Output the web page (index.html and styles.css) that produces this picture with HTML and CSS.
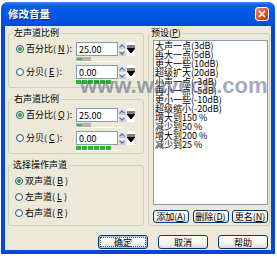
FILE: index.html
```html
<!DOCTYPE html>
<html lang="zh-CN">

<head>
    <meta charset="UTF-8">
    <title>修改音量</title>
    <link rel="stylesheet" href="styles.css">
</head>

<body>
    <div class="window">
        <div class="titlebar">
            <span class="title">修改音量</span>
            <span class="close">
                <svg width="8" height="8" viewBox="0 0 8 8"><path d="M1 1L7 7M7 1L1 7" stroke="#fff" stroke-width="1.6"/></svg>
            </span>
        </div>
        <div class="client">
            <div class="main">
                <div class="left-col">
                    <fieldset class="group">
                        <legend>左声道比例</legend>
                        <div class="opt-row">
                            <label class="radio checked"><span class="dot"></span>百分比(<u>N</u>):</label>
                            <div class="field">
                                <div class="spin">
                                    <span class="input">25.00</span>
                                    <span class="updown"><i class="up"></i><i class="down"></i></span>
                                    <span class="drop"><svg width="8" height="10" viewBox="0 0 8 10"><path d="M0 2H8M0 4H8L4 9Z" stroke="#000" fill="#000"/></svg></span>
                                </div>
                                <div class="meter"><span class="track"><span class="fill"></span></span></div>
                            </div>
                        </div>
                        <div class="opt-row">
                            <label class="radio"><span class="dot"></span>分贝(<u>E</u>):</label>
                            <div class="field">
                                <div class="spin">
                                    <span class="input">0.00</span>
                                    <span class="updown"><i class="up"></i><i class="down"></i></span>
                                    <span class="drop"><svg width="8" height="10" viewBox="0 0 8 10"><path d="M0 2H8M0 4H8L4 9Z" stroke="#000" fill="#000"/></svg></span>
                                </div>
                                <div class="meter"><span class="blocks"><i></i><i></i><i></i><i></i><i></i><i></i></span></div>
                            </div>
                        </div>
                    </fieldset>
                    <fieldset class="group">
                        <legend>右声道比例</legend>
                        <div class="opt-row">
                            <label class="radio checked"><span class="dot"></span>百分比(<u>Q</u>):</label>
                            <div class="field">
                                <div class="spin">
                                    <span class="input">25.00</span>
                                    <span class="updown"><i class="up"></i><i class="down"></i></span>
                                    <span class="drop"><svg width="8" height="10" viewBox="0 0 8 10"><path d="M0 2H8M0 4H8L4 9Z" stroke="#000" fill="#000"/></svg></span>
                                </div>
                                <div class="meter"><span class="track"><span class="fill"></span></span></div>
                            </div>
                        </div>
                        <div class="opt-row">
                            <label class="radio"><span class="dot"></span>分贝(<u>C</u>):</label>
                            <div class="field">
                                <div class="spin">
                                    <span class="input">0.00</span>
                                    <span class="updown"><i class="up"></i><i class="down"></i></span>
                                    <span class="drop"><svg width="8" height="10" viewBox="0 0 8 10"><path d="M0 2H8M0 4H8L4 9Z" stroke="#000" fill="#000"/></svg></span>
                                </div>
                                <div class="meter"><span class="blocks"><i></i><i></i><i></i><i></i><i></i><i></i></span></div>
                            </div>
                        </div>
                    </fieldset>
                    <fieldset class="group channels">
                        <legend>选择操作声道</legend>
                        <label class="radio checked"><span class="dot"></span>双声道(<u>B</u>)</label>
                        <label class="radio"><span class="dot"></span>左声道(<u>L</u>)</label>
                        <label class="radio"><span class="dot"></span>右声道(<u>R</u>)</label>
                    </fieldset>
                </div>
                <fieldset class="group presets">
                    <legend>预设(<u>P</u>)</legend>
                    <div class="listbox">
                        <div>大声一点(3dB)</div>
                        <div>再大一点(5dB)</div>
                        <div>更大一些(10dB)</div>
                        <div>超级扩大(20dB)</div>
                        <div>小声一点(-3dB)</div>
                        <div>再小一点(-5dB)</div>
                        <div>更小一些(-10dB)</div>
                        <div>超级缩小(-20dB)</div>
                        <div>增大到150 %</div>
                        <div>减少到50 %</div>
                        <div>增大到200 %</div>
                        <div>减少到25 %</div>
                    </div>
                    <div class="list-buttons">
                        <button class="btn small">添加(<u>A</u>)</button>
                        <button class="btn small">删除(<u>D</u>)</button>
                        <button class="btn small">更名(<u>N</u>)</button>
                    </div>
                </fieldset>
            </div>
            <div class="footer">
                <button class="btn default">确定</button>
                <button class="btn">取消</button>
                <button class="btn">帮助</button>
            </div>
        </div>
    </div>
    <div class="watermark">www.wavecn.com</div>
</body>

</html>
```

FILE: styles.css
```css
* {
    box-sizing: border-box;
}

body {
    margin: 0;
    width: 277px;
    height: 259px;
    overflow: hidden;
    position: relative;
    background: #fff;
    font-family: "Noto Sans CJK SC", sans-serif;
    font-size: 9px;
    line-height: 10px;
    color: #000;
}

u {
    text-decoration: underline;
}

.window {
    margin: 2px 0 0 1px;
    width: 274px;
    height: 252px;
    display: flex;
    flex-direction: column;
    background: #0844d8;
    border-radius: 7px 7px 0 0;
}

.titlebar {
    height: 24px;
    flex: none;
    display: flex;
    align-items: center;
    justify-content: space-between;
    padding: 0 6px 0 7px;
    border-radius: 7px 7px 0 0;
    background: linear-gradient(#3d8df5 0, #0a5fe8 3px, #0257e7 45%, #0052e0 85%, #0445c6 100%);
}

.title {
    color: #fff;
    font-size: 10.5px;
    font-weight: bold;
    text-shadow: 1px 1px 0 #0a2a8a;
}

.close {
    width: 14px;
    height: 14px;
    display: flex;
    align-items: center;
    justify-content: center;
    border: 1px solid #fff;
    border-radius: 3px;
    background: linear-gradient(135deg, #f08a62, #df4b22 60%, #c8381a);
}

.client {
    flex: 1;
    margin: 0 4px 4px;
    background: #ece9d8;
    display: flex;
    flex-direction: column;
}

.main {
    display: flex;
    gap: 4px;
    margin-top: 2px;
    padding-left: 3px;
}

.left-col {
    width: 136px;
    display: flex;
    flex-direction: column;
    gap: 6px;
}

.group {
    margin: 0;
    min-width: 0;
    border: 1px solid #d0d0bf;
    border-radius: 3px;
    padding: 4px 0 2px 7px;
}

.group legend {
    padding: 0 1px;
    margin-left: -3px;
    line-height: 10px;
}

.opt-row {
    display: flex;
    align-items: flex-start;
}

.opt-row + .opt-row {
    margin-top: 3px;
}

.opt-row .radio {
    width: 60px;
    height: 14px;
}

.radio {
    display: flex;
    align-items: center;
    gap: 2px;
    white-space: nowrap;
}

.dot {
    width: 8px;
    height: 8px;
    border: 1px solid #2a5a8c;
    border-radius: 50%;
    background: radial-gradient(circle at 65% 65%, #fff, #dcdcd4);
    display: flex;
    align-items: center;
    justify-content: center;
}

.checked .dot::after {
    content: "";
    width: 4px;
    height: 4px;
    border-radius: 50%;
    background: #2fa72f;
}

.field {
    width: 59px;
}

.spin {
    display: flex;
    gap: 1px;
    height: 14px;
}

.input {
    width: 44px;
    border: 1px solid #7f9db9;
    background: #fff;
    padding: 1px 0 0 2px;
    line-height: 11px;
}

.updown {
    width: 7px;
    display: flex;
    flex-direction: column;
    gap: 1px;
}

.updown i {
    flex: 1;
    background: linear-gradient(#e6eeff, #b8c9f2);
    border-radius: 1px;
    position: relative;
}

.updown i::after {
    content: "";
    position: absolute;
    left: 1px;
    width: 3px;
    height: 3px;
    border-left: 1px solid #4d6185;
    border-top: 1px solid #4d6185;
}

.updown .up::after {
    top: 3px;
    transform: rotate(45deg);
}

.updown .down::after {
    top: 0;
    transform: rotate(225deg);
}

.drop {
    width: 8px;
    background: #fff;
    display: flex;
    align-items: center;
    justify-content: center;
}

.meter {
    height: 5px;
    margin-top: 1px;
    width: 45px;
    border-bottom: 1px solid #fdfdfb;
    display: flex;
}

.track {
    width: 15px;
    height: 4px;
    background: #b4b4ae;
    padding: 1px;
}

.track .fill {
    display: block;
    width: 5px;
    height: 2px;
    background: #3fbf3f;
}

.blocks {
    display: flex;
    gap: 1px;
    height: 4px;
}

.blocks i {
    width: 5px;
    background: #32b432;
}

.channels {
    padding: 2px 0 5px 6px;
}

.channels .radio {
    height: 16px;
    padding-top: 1px;
}

.presets {
    width: 122px;
    padding: 2px 1px 1px 4px;
    display: flex;
    flex-direction: column;
}

.listbox {
    height: 165px;
    background: #fff;
    border: 1px solid #7f9db9;
    padding: 0 1px;
    line-height: 9px;
    white-space: nowrap;
}

.list-buttons {
    display: flex;
    justify-content: space-between;
    margin-top: 5px;
}

.btn {
    font: inherit;
    color: #000;
    height: 14px;
    width: 50px;
    padding: 0;
    line-height: 11px;
    border: 1px solid #003c74;
    border-radius: 3px;
    background: linear-gradient(#fff, #f3f3ef 60%, #dedbcf);
}

.btn.small {
    width: 36px;
    height: 13px;
}

.btn.default {
    box-shadow: inset 0 0 0 1px #a9c2ef;
    outline: 1px dotted #555;
    outline-offset: -3px;
}

.footer {
    display: flex;
    justify-content: flex-end;
    gap: 10px;
    margin-top: 9px;
    padding-right: 3px;
}

.watermark {
    position: absolute;
    left: 80px;
    top: 74px;
    font-family: "Liberation Sans", sans-serif;
    font-weight: bold;
    font-size: 22px;
    line-height: 24px;
    color: rgba(70, 85, 120, 0.5);
    pointer-events: none;
}
```
